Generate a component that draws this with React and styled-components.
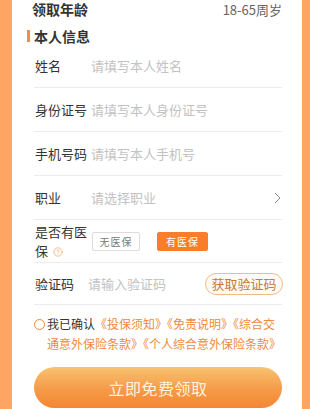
import React, { useState } from "react";
import styled, { createGlobalStyle } from "styled-components";
import { CircleHelp } from "lucide-react";

const Global = createGlobalStyle`
  html, body { margin: 0; padding: 0; }
  body {
    background: #ffa564;
    font-family: "Noto Sans CJK SC", "Noto Sans", sans-serif;
    -webkit-font-smoothing: antialiased;
  }
  * { box-sizing: border-box; }
`;

const Page = styled.div`
  background: #ffa564;
  padding: 0 8px 0 12px;
  min-height: 409px;
`;

const Card = styled.div`
  background: #fff;
  padding: 0 20px 0 22px;
  min-height: 409px;
`;

const AgeRow = styled.div`
  height: 18px;
  display: flex;
  align-items: center;
  justify-content: space-between;
  margin-left: -2px;
`;

const AgeLabel = styled.span`
  font-size: 14px;
  font-weight: 700;
  color: #333;
`;

const AgeValue = styled.span`
  font-size: 13px;
  color: #666;
`;

const SectionTitle = styled.div`
  margin-top: 10px;
  margin-left: -7px;
  height: 16px;
  display: flex;
  align-items: center;
  gap: 4px;
  font-size: 14px;
  font-weight: 700;
  color: #333;
  line-height: 16px;
`;

const Bar = styled.span`
  width: 3px;
  height: 12px;
  background: #fa8b3a;
`;

const Row = styled.div`
  height: ${(p) => p.$h || 44}px;
  display: flex;
  align-items: center;
  border-bottom: 1px solid #ececec;
`;

const Label = styled.div`
  width: ${(p) => p.$w || 57}px;
  flex-shrink: 0;
  font-size: 13px;
  color: #333;
  line-height: 19px;
  padding-left: 1px;
`;

const Input = styled.input`
  flex: 1;
  min-width: 0;
  border: none;
  outline: none;
  font-family: inherit;
  font-size: 13px;
  color: #333;
  padding: 0;
  background: transparent;
  &::placeholder {
    color: #c2c2c2;
  }
`;

const Placeholder = styled.span`
  flex: 1;
  font-size: 13px;
  color: #c2c2c2;
`;

const Chevron = styled.svg`
  width: 7px;
  height: 12px;
  margin-right: 1px;
`;

const HelpIcon = styled(CircleHelp)`
  vertical-align: -1px;
  margin-left: 5px;
`;

const Choices = styled.div`
  display: flex;
  gap: 17px;
  margin-left: 1px;
`;

const Choice = styled.button`
  height: 19px;
  width: ${(p) => (p.$active ? 51 : 48)}px;
  padding: 0;
  border-radius: 2px;
  font-family: inherit;
  font-size: 10px;
  letter-spacing: 1px;
  border: 1px solid ${(p) => (p.$active ? "#fa7d2c" : "#dcdcdc")};
  background: ${(p) => (p.$active ? "#fa7d2c" : "#fff")};
  color: ${(p) => (p.$active ? "#fff" : "#777")};
  display: flex;
  align-items: center;
  justify-content: center;
`;

const CodeButton = styled.button`
  height: 22px;
  width: 78px;
  padding: 0;
  border-radius: 11px;
  border: 1px solid #ecbd8b;
  background: #fffaf4;
  color: #c77a33;
  font-family: inherit;
  font-size: 13px;
  display: flex;
  align-items: center;
  justify-content: center;
  margin-right: -1px;
`;

const Agreement = styled.div`
  display: flex;
  align-items: flex-start;
  padding-top: 9px;
`;

const Radio = styled.span`
  width: 11px;
  height: 11px;
  border-radius: 50%;
  border: 1.5px solid #f08a3c;
  margin-top: 5px;
  flex-shrink: 0;
`;

const AgreeText = styled.div`
  width: 236px;
  flex-shrink: 0;
  margin-left: 2px;
  font-size: 12px;
  line-height: 20px;
  color: #333;
`;

const Link = styled.span`
  color: #ef8a3d;
`;

const Submit = styled.button`
  margin-top: 13px;
  width: 100%;
  height: 41px;
  border: none;
  border-radius: 21px;
  background: linear-gradient(180deg, #f8c36f 0%, #f59a48 55%, #f48733 100%);
  color: #fff3df;
  font-family: inherit;
  font-size: 16px;
  letter-spacing: 0.5px;
  display: flex;
  align-items: center;
  justify-content: center;
`;

export default function App() {
  const [insured, setInsured] = useState(true);
  return (
    <>
      <Global />
      <Page>
        <Card>
          <AgeRow>
            <AgeLabel>领取年龄</AgeLabel>
            <AgeValue>18-65周岁</AgeValue>
          </AgeRow>
          <SectionTitle>
            <Bar />
            本人信息
          </SectionTitle>
          <Row>
            <Label>姓名</Label>
            <Input placeholder="请填写本人姓名" />
          </Row>
          <Row>
            <Label>身份证号</Label>
            <Input placeholder="请填写本人身份证号" />
          </Row>
          <Row>
            <Label>手机号码</Label>
            <Input placeholder="请填写本人手机号" />
          </Row>
          <Row>
            <Label>职业</Label>
            <Placeholder>请选择职业</Placeholder>
            <Chevron viewBox="0 0 7 12">
              <path d="M1 1 L6 6 L1 11" fill="none" stroke="#8a8a8a" strokeWidth="1" />
            </Chevron>
          </Row>
          <Row $h={43}>
            <Label>
              是否有医保
              <HelpIcon size={10} color="#e3a159" strokeWidth={1.6} />
            </Label>
            <Choices>
              <Choice $active={!insured} onClick={() => setInsured(false)}>无医保</Choice>
              <Choice $active={insured} onClick={() => setInsured(true)}>有医保</Choice>
            </Choices>
          </Row>
          <Row $h={42}>
            <Label $w={54}>验证码</Label>
            <Input placeholder="请输入验证码" />
            <CodeButton>获取验证码</CodeButton>
          </Row>
          <Agreement>
            <Radio />
            <AgreeText>
              我已确认<Link>《投保须知》《免责说明》《综合交通意外保险条款》《个人综合意外保险条款》</Link>
            </AgreeText>
          </Agreement>
          <Submit>立即免费领取</Submit>
        </Card>
      </Page>
    </>
  );
}
